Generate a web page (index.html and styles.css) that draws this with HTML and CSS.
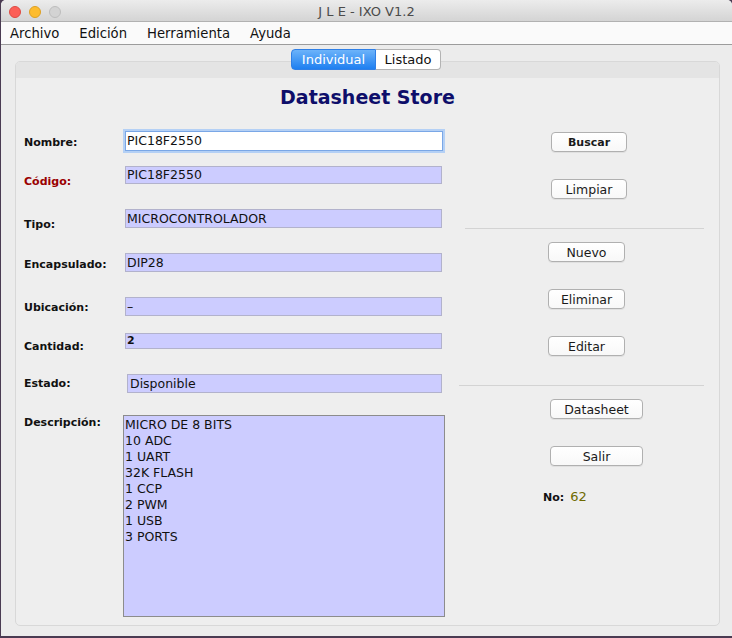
FILE: index.html
```html
<!DOCTYPE html>
<html lang="es">
<head>
<meta charset="utf-8">
<title>J L E - IXO V1.2</title>
<link rel="stylesheet" href="styles.css">
</head>
<body>
<div class="window">
  <div class="titlebar">
    <div class="lights">
      <span class="light red"></span>
      <span class="light yellow"></span>
      <span class="light gray"></span>
    </div>
    <div class="title">J L E - IXO V1.2</div>
  </div>
  <div class="menubar">
    <span class="menu">Archivo</span>
    <span class="menu">Edición</span>
    <span class="menu">Herramienta</span>
    <span class="menu">Ayuda</span>
  </div>
  <div class="content">
    <div class="tabs">
      <span class="tab active">Individual</span>
      <span class="tab">Listado</span>
    </div>
    <div class="panel">
      <div class="strip"></div>
      <div class="main">
        <h1 class="heading">Datasheet Store</h1>
        <div class="columns">
          <div class="form">
            <div class="row row-nombre">
              <span class="label">Nombre:</span>
              <span class="field focus">PIC18F2550</span>
            </div>
            <div class="row row-codigo">
              <span class="label red-label">Código:</span>
              <span class="field">PIC18F2550</span>
            </div>
            <div class="row row-tipo">
              <span class="label">Tipo:</span>
              <span class="field">MICROCONTROLADOR</span>
            </div>
            <div class="row row-encap">
              <span class="label">Encapsulado:</span>
              <span class="field">DIP28</span>
            </div>
            <div class="row row-ubic">
              <span class="label">Ubicación:</span>
              <span class="field">–</span>
            </div>
            <div class="row row-cant">
              <span class="label">Cantidad:</span>
              <span class="field bold-field">2</span>
            </div>
            <div class="row row-estado">
              <span class="label">Estado:</span>
              <span class="field field-estado">Disponible</span>
            </div>
            <div class="row row-desc">
              <span class="label">Descripción:</span>
              <div class="textarea">MICRO DE 8 BITS<br>10 ADC<br>1 UART<br>32K FLASH<br>1 CCP<br>2 PWM<br>1 USB<br>3 PORTS</div>
            </div>
          </div>
          <div class="actions">
            <button class="btn btn-a btn-bold first">Buscar</button>
            <button class="btn btn-a">Limpiar</button>
            <div class="sep sep1"></div>
            <button class="btn btn-b after-sep">Nuevo</button>
            <button class="btn btn-b">Eliminar</button>
            <button class="btn btn-b">Editar</button>
            <div class="sep sep2"></div>
            <button class="btn btn-c after-sep">Datasheet</button>
            <button class="btn btn-c">Salir</button>
            <div class="counter"><span class="counter-label">No:</span><span class="counter-value">62</span></div>
          </div>
        </div>
      </div>
    </div>
  </div>
</div>
</body>
</html>
```

FILE: styles.css
```css
html, body {
  margin: 0;
  padding: 0;
}
body {
  background: #4a3b52;
  width: 732px;
  height: 638px;
  overflow: hidden;
  font-family: "DejaVu Sans", "Liberation Sans", sans-serif;
}
.window {
  margin-left: 1px;
  width: 731px;
  height: 636px;
  background: #ececec;
  border-radius: 5px 5px 0 0;
  overflow: hidden;
  display: flex;
  flex-direction: column;
}
.titlebar {
  height: 22px;
  box-sizing: border-box;
  background: linear-gradient(#ececec, #d4d4d4);
  border-bottom: 1px solid #b1b1b1;
  position: relative;
  display: flex;
  justify-content: center;
  align-items: center;
}
.lights {
  position: absolute;
  left: 8px;
  top: 6px;
  display: flex;
  gap: 8px;
}
.light {
  width: 12px;
  height: 12px;
  box-sizing: border-box;
  border-radius: 50%;
}
.light.red { background: #fc5f57; border: 1px solid #de4a42; }
.light.yellow { background: #fdbc2e; border: 1px solid #dda023; }
.light.gray { background: #d3d3d3; border: 1px solid #bdbdbd; }
.title {
  font-size: 13px;
  color: #4b4b4b;
  margin-top: 1px;
}
.menubar {
  height: 23px;
  box-sizing: border-box;
  background: #fafafa;
  border-bottom: 1px solid #9c9c9c;
  display: flex;
  align-items: center;
  gap: 20px;
  padding-left: 9px;
}
.menu {
  font-size: 13.2px;
  color: #111;
}
.content {
  flex: 1;
  display: flex;
  flex-direction: column;
}
.tabs {
  margin-top: 4px;
  height: 21px;
  display: flex;
  justify-content: center;
  position: relative;
  z-index: 2;
  margin-left: -1px;
}
.tab {
  height: 21px;
  box-sizing: border-box;
  font-size: 13px;
  line-height: 19px;
  padding: 0 0;
  background: #fff;
  border: 1px solid #b3b3b3;
  color: #111;
  text-align: center;
}
.tab.active {
  width: 85px;
  border-radius: 4px 0 0 4px;
  border-color: #2f7fe6;
  background: linear-gradient(#6cb3fa, #1e7ff0);
  color: #fff;
}
.tab:last-child {
  width: 65px;
  border-left: none;
  border-radius: 0 4px 4px 0;
}
.panel {
  margin: -9px 0 0 14px;
  width: 705px;
  height: 565px;
  box-sizing: border-box;
  border: 1px solid #d8d8d8;
  border-radius: 5px;
  background: #eeeeee;
  overflow: hidden;
  display: flex;
  flex-direction: column;
}
.strip {
  height: 16px;
  background: #e4e4e4;
  flex: none;
}
.main {
  flex: 1;
  display: flex;
  flex-direction: column;
}
.heading {
  margin: 8px 0 0 0;
  font-size: 19px;
  line-height: 23px;
  font-weight: bold;
  color: #0e0e6a;
  text-align: center;
}
.columns {
  display: flex;
}
.form {
  width: 443px;
  box-sizing: border-box;
  padding-left: 8px;
  display: flex;
  flex-direction: column;
}
.row {
  display: flex;
  align-items: flex-start;
}
.label {
  width: 101px;
  flex: none;
  font-size: 11px;
  line-height: 13px;
  font-weight: bold;
  color: #111;
}
.red-label { color: #9a0000; }
.field {
  width: 317px;
  box-sizing: border-box;
  background: #ccccff;
  border: 1px solid #b2b2cc;
  font-size: 12.5px;
  color: #111;
  padding-left: 1px;
  white-space: nowrap;
}
.field.focus {
  width: 318px;
  background: #fff;
  border: 1px solid #7aa7e6;
  box-shadow: 0 0 0 2px #b4d0f5;
}
.bold-field {
  font-weight: bold;
  font-size: 11px;
}
.field-estado {
  margin-left: 2px;
  width: 315px;
  padding-left: 2px;
}
.row-nombre { margin-top: 22px; }
.row-nombre .field { height: 20px; line-height: 18px; }
.row-nombre .label { margin-top: 5px; }
.row-codigo { margin-top: 15px; height: 18px; }
.row-codigo .field { height: 18px; line-height: 16px; }
.row-codigo .label { margin-top: 9px; }
.row-tipo { margin-top: 25px; height: 19px; }
.row-tipo .field { height: 19px; line-height: 17px; }
.row-tipo .label { margin-top: 9px; }
.row-encap { margin-top: 25px; height: 19px; }
.row-encap .field { height: 19px; line-height: 17px; }
.row-encap .label { margin-top: 5px; }
.row-ubic { margin-top: 25px; height: 19px; }
.row-ubic .field { height: 19px; line-height: 17px; }
.row-ubic .label { margin-top: 4px; }
.row-cant { margin-top: 17px; height: 16px; }
.row-cant .field { height: 16px; line-height: 14px; }
.row-cant .label { margin-top: 7px; }
.row-estado { margin-top: 25px; height: 19px; }
.row-estado .field { height: 19px; line-height: 17px; }
.row-estado .label { margin-top: 3px; }
.row-desc { margin-top: 22px; }
.row-desc .label { margin-top: 1px; }
.textarea {
  margin-left: -2px;
  width: 322px;
  height: 202px;
  box-sizing: border-box;
  border: 1px solid #8c8c8c;
  background: #ccccff;
  font-size: 12.5px;
  line-height: 16px;
  color: #111;
  padding: 1px 1px;
}
.actions {
  width: 245px;
  display: flex;
  flex-direction: column;
  align-items: flex-start;
}
.btn {
  height: 20px;
  box-sizing: border-box;
  border: 1px solid #b0b0b0;
  border-radius: 4px;
  background: linear-gradient(#ffffff, #f8f8f8);
  box-shadow: 0 1px 0 rgba(0,0,0,0.06);
  font-family: "DejaVu Sans", "Liberation Sans", sans-serif;
  font-size: 12.5px;
  line-height: 17px;
  color: #1a1a1a;
  padding: 0;
  margin-top: 27px;
  text-align: center;
}
.btn.first { margin-top: 23px; }
.btn.after-sep { margin-top: 13px; }
.btn-a { margin-left: 92px; width: 76px; }
.btn-b { margin-left: 89px; width: 77px; }
.btn-c { margin-left: 91px; width: 93px; }
.btn-bold {
  font-weight: bold;
  font-size: 11px;
}
.sep {
  height: 1px;
  background: #d3d3d3;
  margin-top: 29px;
}
.sep1 { margin-left: 6px; width: 239px; }
.sep2 { margin-left: 0; width: 245px; }
.counter {
  margin-top: 23px;
  margin-left: 84px;
  display: flex;
  align-items: baseline;
  gap: 6px;
  line-height: 16px;
}
.counter-label {
  font-size: 11px;
  font-weight: bold;
  color: #111;
}
.counter-value {
  font-size: 13px;
  color: #6f6a00;
}
```
